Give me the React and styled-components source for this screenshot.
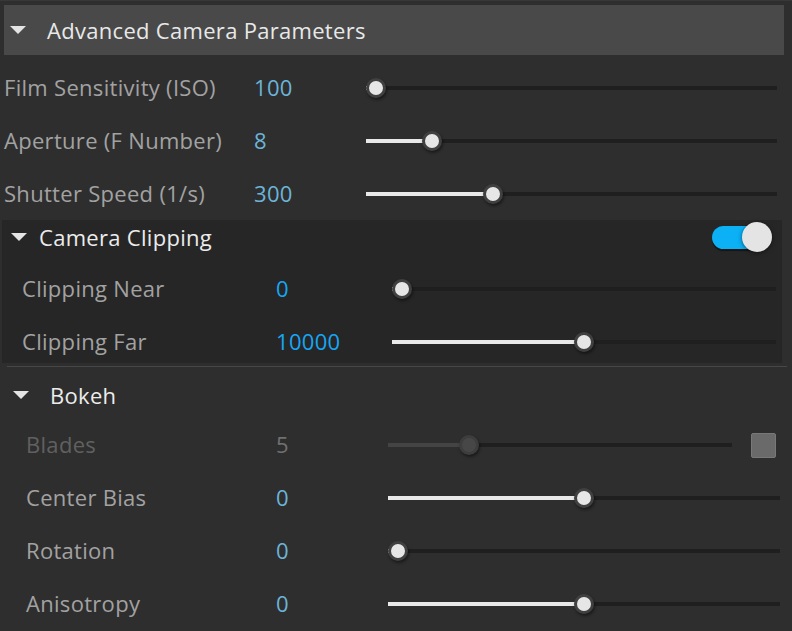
import React from 'react';
import styled, { createGlobalStyle, css } from 'styled-components';

const GlobalStyle = createGlobalStyle`
  html, body {
    margin: 0;
    padding: 0;
    background: #2e2e2e;
  }
  body {
    font-family: "Open Sans", "Noto Sans", "Liberation Sans", sans-serif;
    -webkit-font-smoothing: antialiased;
  }
`;

const Page = styled.div`
  width: 792px;
  height: 631px;
  overflow: hidden;
  background: #2e2e2e;
  border-top: 1px solid #383838;
  box-sizing: border-box;
  padding-top: 4px;
  display: flex;
  flex-direction: column;
  font-size: 22px;
  letter-spacing: 0.3px;
`;

const Caret = styled.span`
  width: 0;
  height: 0;
  border-left: 8px solid transparent;
  border-right: 8px solid transparent;
  border-top: 8px solid #e4e4e4;
  flex-shrink: 0;
`;

const TopHeader = styled.div`
  margin-left: 4px;
  width: 780px;
  height: 50px;
  background: #494949;
  display: flex;
  align-items: center;
  padding-left: 6px;
  box-sizing: border-box;
  gap: 21px;
  color: #e8e8e8;
`;

const SubHeader = styled.div`
  height: 34px;
  display: flex;
  align-items: center;
  color: #ececec;
  ${({ $pad, $gap }) => css`
    padding-left: ${$pad}px;
    gap: ${$gap}px;
  `}
`;

const RowList = styled.div`
  display: flex;
  flex-direction: column;
  gap: 13px;
  ${({ $top }) => css`margin-top: ${$top}px;`}
`;

const Row = styled.div`
  height: 40px;
  display: grid;
  align-items: center;
  ${({ $cols, $pad, $right }) => css`
    grid-template-columns: ${$cols};
    padding-left: ${$pad}px;
    padding-right: ${$right}px;
  `}
`;

const Label = styled.span`
  color: ${({ $disabled }) => ($disabled ? '#606060' : '#a2a2a2')};
  white-space: nowrap;
  margin-bottom: 2px;
`;

const Value = styled.span`
  color: ${({ $tone }) => ({ soft: '#6cb4d9', bright: '#16a6f5', off: '#707070' }[$tone])};
  margin-bottom: 2px;
`;

const SliderCell = styled.div`
  display: flex;
  align-items: center;
  gap: 19px;
`;

const Track = styled.div`
  position: relative;
  flex: 1;
  height: 4px;
  background: #1f1f1f;
`;

const Fill = styled.div`
  height: 100%;
  background: ${({ $disabled }) => ($disabled ? '#444' : '#e9e9e9')};
`;

const Thumb = styled.div`
  position: absolute;
  top: 50%;
  width: 14px;
  height: 14px;
  border-radius: 50%;
  transform: translate(-50%, -50%);
  background: ${({ $disabled }) => ($disabled ? '#474747' : '#e6e6e6')};
  border: 3px solid ${({ $disabled }) => ($disabled ? '#3d3d3d' : '#404040')};
  box-shadow: 1px 2px 3px rgba(0, 0, 0, 0.45);
`;

const CheckBox = styled.div`
  width: 23px;
  height: 23px;
  margin-right: 4px;
  background: #6a6a6a;
  border: 1px solid #787878;
  border-radius: 2px;
`;

const Panel = styled.div`
  margin: 6px 10px 0 2px;
  height: 143px;
  background: #262626;
`;

const Toggle = styled.div`
  margin-left: auto;
  margin-right: 17px;
  position: relative;
  width: 53px;
  height: 23px;
  border-radius: 12px;
  background: #0bb0f5;
  box-shadow: 0 2px 1px rgba(0, 0, 0, 0.45);
`;

const ToggleKnob = styled.div`
  position: absolute;
  right: -7px;
  top: 50%;
  transform: translateY(-50%);
  width: 30px;
  height: 30px;
  border-radius: 50%;
  background: #e4e4e4;
  box-shadow: 0 1px 4px rgba(0, 0, 0, 0.5);
`;

const Divider = styled.div`
  margin: 3px 5px 0 7px;
  height: 1px;
  background: #474747;
`;

const Slider = ({ f, disabled }) => (
  <Track>
    <Fill $disabled={disabled} style={{ width: `calc(10px + (100% - 20px) * ${f})` }} />
    <Thumb $disabled={disabled} style={{ left: `calc(10px + (100% - 20px) * ${f})` }} />
  </Track>
);

const mainRows = [
  { label: 'Film Sensitivity (ISO)', value: '100', f: 0 },
  { label: 'Aperture (F Number)', value: '8', f: 0.143 },
  { label: 'Shutter Speed (1/s)', value: '300', f: 0.3 },
];

const clipRows = [
  { label: 'Clipping Near', value: '0', f: 0 },
  { label: 'Clipping Far', value: '10000', f: 0.5 },
];

const bokehRows = [
  { label: 'Blades', value: '5', f: 0.22, disabled: true },
  { label: 'Center Bias', value: '0', f: 0.5 },
  { label: 'Rotation', value: '0', f: 0 },
  { label: 'Anisotropy', value: '0', f: 0.5 },
];

const layouts = {
  main: { cols: '250px 112px 1fr', pad: 4, right: 15, tone: 'soft' },
  clip: { cols: '254px 116px 1fr', pad: 20, right: 6, tone: 'bright' },
  bokeh: { cols: '250px 112px 1fr', pad: 26, right: 12, tone: 'soft' },
};

const ParamRows = ({ rows, layout, top }) => {
  const { cols, pad, right, tone } = layouts[layout];
  return (
    <RowList $top={top}>
      {rows.map(({ label, value, f, disabled }) => (
        <Row key={label} $cols={cols} $pad={pad} $right={right}>
          <Label $disabled={disabled}>{label}</Label>
          <Value $tone={disabled ? 'off' : tone}>{value}</Value>
          <SliderCell>
            <Slider f={f} disabled={disabled} />
            {disabled && <CheckBox />}
          </SliderCell>
        </Row>
      ))}
    </RowList>
  );
};

export default function App() {
  return (
    <Page>
      <GlobalStyle />
      <TopHeader>
        <Caret />
        Advanced Camera Parameters
      </TopHeader>
      <ParamRows rows={mainRows} layout="main" top={13} />
      <Panel>
        <SubHeader $pad={9} $gap={12}>
          <Caret />
          Camera Clipping
          <Toggle>
            <ToggleKnob />
          </Toggle>
        </SubHeader>
        <ParamRows rows={clipRows} layout="clip" top={15} />
      </Panel>
      <Divider />
      <SubHeader $pad={13} $gap={21} style={{ marginTop: 11 }}>
        <Caret />
        Bokeh
      </SubHeader>
      <ParamRows rows={bokehRows} layout="bokeh" top={13} />
    </Page>
  );
}
